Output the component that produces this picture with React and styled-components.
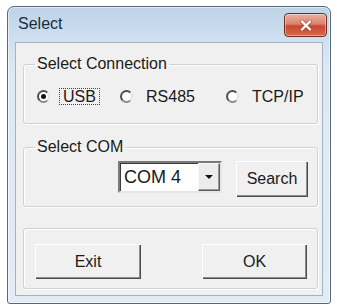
import React from 'react'
import styled, { createGlobalStyle } from 'styled-components'

const GlobalStyle = createGlobalStyle`
  body {
    margin: 0;
    background: #fff;
    font-family: "Liberation Sans", Arial, sans-serif;
    color: #1a1a1a;
  }
`

const Stage = styled.div`
  padding: 6px 0 0 7px;
`

const Window = styled.div`
  width: 324px;
  height: 298px;
  box-sizing: border-box;
  border: 1px solid #56687a;
  border-radius: 7px 7px 3px 3px;
  background: linear-gradient(#bdd3e8, #cfe0f0 34px, #dce8f3 60px, #e2ecf5);
  box-shadow: inset 0 0 0 1px rgba(255, 255, 255, 0.55);
  display: flex;
  flex-direction: column;
  padding: 0 7px 7px 7px;
`

const TitleBar = styled.div`
  height: 35px;
  flex-shrink: 0;
  display: flex;
  align-items: center;
  justify-content: space-between;
  margin: 0 -4px 0 -7px;
  padding-left: 10px;
`

const Title = styled.span`
  font-size: 16px;
  line-height: 18px;
  color: #1c2b3e;
  margin-top: -1px;
`

const CloseButton = styled.button`
  align-self: flex-start;
  margin-top: 6px;
  width: 43px;
  height: 24px;
  padding: 0;
  border: 1px solid #6e2c22;
  border-radius: 4px;
  background: linear-gradient(#eab1a3, #dc826d 45%, #c9472f 55%, #d4694d);
  box-shadow: inset 0 0 0 1px rgba(255, 255, 255, 0.4);
  display: grid;
  place-items: center;
`

const Content = styled.div`
  flex: 1;
  background: #f0f0f0;
  border: 1px solid #a3b3c3;
  display: flex;
  flex-direction: column;
  padding: 12px 0 0 7px;
`

const GroupBox = styled.fieldset`
  box-sizing: border-box;
  width: 295px;
  height: ${(p) => p.$h}px;
  margin: ${(p) => p.$mt}px 0 0 0;
  padding: 0;
  min-width: 0;
  border: 1px solid #cdd3d8;
  border-radius: 3px;
  box-shadow: inset 1px 1px 0 #fff, 1px 1px 0 #fff;
`

const Legend = styled.legend`
  font-size: 16px;
  line-height: 18px;
  margin-left: 11px;
  padding: 0 2px;
`

const GroupBody = styled.div`
  display: flex;
  align-items: flex-start;
  padding: ${(p) => p.$pad};
`

const RadioItem = styled.label`
  display: flex;
  align-items: center;
  width: ${(p) => p.$w}px;
  font-size: 16px;
`

const RadioCircle = styled.span`
  width: 13px;
  height: 13px;
  box-sizing: border-box;
  border-radius: 50%;
  border: 2px solid;
  border-color: #4e4e4e #e4e4e4 #8a8a8a #4e4e4e;
  background: #fff;
  display: grid;
  place-items: center;
  margin-right: 9px;

  &::after {
    content: '';
    width: 5px;
    height: 5px;
    border-radius: 50%;
    background: ${(p) => (p.$checked ? '#111' : 'transparent')};
  }
`

const RadioText = styled.span`
  line-height: 15px;
  padding: 0 3px;
  border: 1px dotted ${(p) => (p.$focus ? '#444' : 'transparent')};
`

const Combo = styled.div`
  box-sizing: border-box;
  width: 104px;
  height: 32px;
  border: 2px solid;
  border-color: #7a7a7a #e6e6e6 #e6e6e6 #7a7a7a;
  box-shadow: inset 1px 1px 0 #3c3c3c;
  background: #fff;
  display: flex;
  align-items: center;
  justify-content: space-between;
  padding-left: 4px;
`

const ComboValue = styled.span`
  font-size: 18px;
`

const ComboArrow = styled.span`
  box-sizing: border-box;
  width: 22px;
  align-self: stretch;
  background: #ececec;
  border: 1px solid;
  border-color: #f6f6f6 #5c5c5c #5c5c5c #f6f6f6;
  box-shadow: inset -1px -1px 0 #9a9a9a;
  display: grid;
  place-items: center;

  &::after {
    content: '';
    border-left: 4px solid transparent;
    border-right: 4px solid transparent;
    border-top: 4px solid #111;
  }
`

const Button = styled.button`
  box-sizing: border-box;
  width: ${(p) => p.$w}px;
  height: ${(p) => p.$h}px;
  margin-left: ${(p) => p.$ml || 0}px;
  padding: 0;
  font-family: inherit;
  font-size: 16px;
  color: #1a1a1a;
  background: #f0f0f0;
  border: none;
  box-shadow: inset 1px 1px 0 #fff, inset -1px -1px 0 #4a4a4a,
    inset -2px -2px 0 #8e8e8e;
`

function CloseIcon() {
  return (
    <svg width="12" height="11" viewBox="0 0 12 11">
      <path d="M2 1.5 L10 9.5 M10 1.5 L2 9.5" stroke="#8a3a2a" strokeWidth="4" strokeLinecap="round" opacity="0.5" />
      <path d="M2 1.5 L10 9.5 M10 1.5 L2 9.5" stroke="#fff" strokeWidth="2.4" strokeLinecap="round" />
    </svg>
  )
}

const connections = [
  { id: 'usb', label: 'USB', width: 83, checked: true },
  { id: 'rs485', label: 'RS485', width: 106 },
  { id: 'tcp', label: 'TCP/IP', width: 90 },
]

export default function App() {
  return (
    <>
      <GlobalStyle />
      <Stage>
        <Window>
          <TitleBar>
            <Title>Select</Title>
            <CloseButton>
              <CloseIcon />
            </CloseButton>
          </TitleBar>
          <Content>
            <GroupBox $h={69} $mt={0}>
              <Legend>Select Connection</Legend>
              <GroupBody $pad="15px 0 0 13px">
                {connections.map((c) => (
                  <RadioItem key={c.id} $w={c.width}>
                    <RadioCircle $checked={c.checked} />
                    <RadioText $focus={c.checked}>{c.label}</RadioText>
                  </RadioItem>
                ))}
              </GroupBody>
            </GroupBox>
            <GroupBox $h={69} $mt={14}>
              <Legend>Select COM</Legend>
              <GroupBody $pad="5px 0 0 94px">
                <Combo>
                  <ComboValue>COM 4</ComboValue>
                  <ComboArrow />
                </Combo>
                <Button $w={72} $h={36} $ml={14}>Search</Button>
              </GroupBody>
            </GroupBox>
            <GroupBox $h={61} $mt={21}>
              <GroupBody $pad="15px 0 0 11px">
                <Button $w={106} $h={35}>Exit</Button>
                <Button $w={105} $h={35} $ml={61}>OK</Button>
              </GroupBody>
            </GroupBox>
          </Content>
        </Window>
      </Stage>
    </>
  )
}
